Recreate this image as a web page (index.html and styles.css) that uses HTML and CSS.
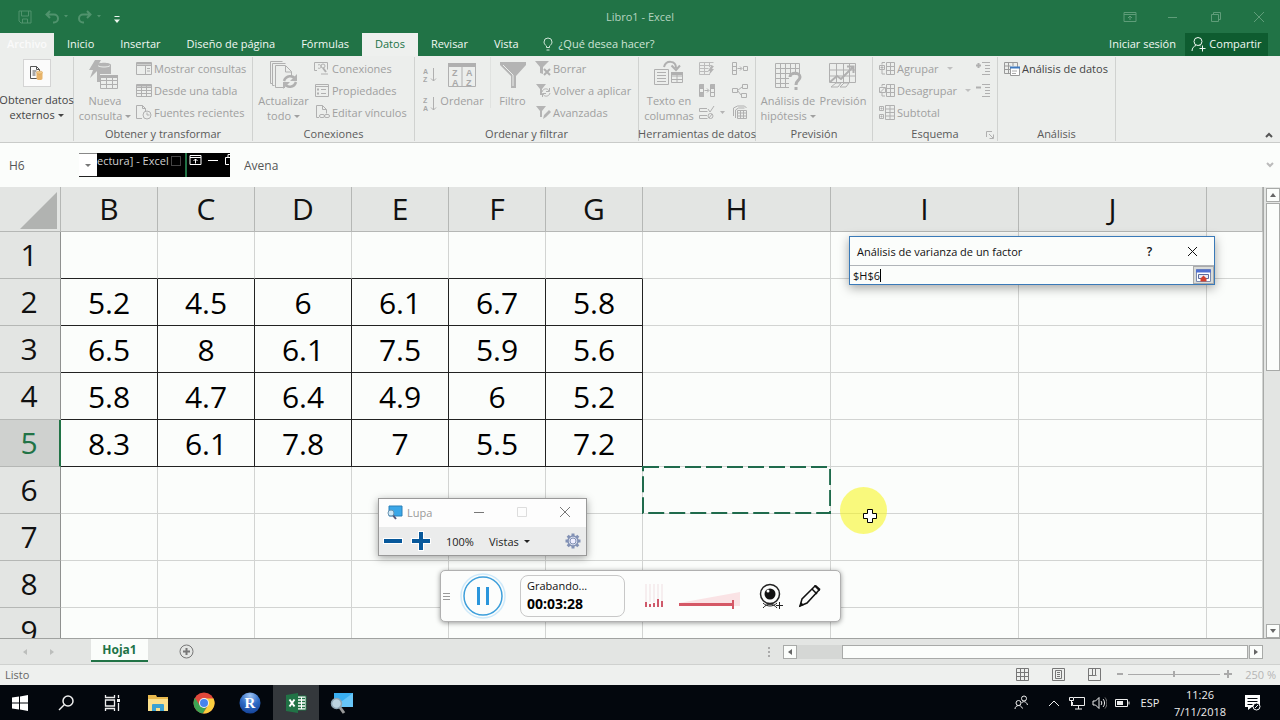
FILE: index.html
```html
<!DOCTYPE html>
<html lang="es">
<head>
<meta charset="utf-8">
<title>Libro1 - Excel</title>
<link rel="stylesheet" href="styles.css">
</head>
<body>
<div class="app">
  <header class="titlebar">
    <div class="quick">
      <button class="qbtn save" aria-label="Guardar"><svg width="14" height="14" viewBox="0 0 14 14"><path d="M1 1h12v12H3l-2-2zM3.500 1v5h7V1M4.500 13V9h5v4"/></svg></button>
      <button class="qbtn wide" aria-label="Deshacer"><svg width="24" height="14" viewBox="0 0 24 14"><path d="M5 1L1.500 4.500 5 8M2 4.500h7a4 4 0 0 1 0 8H8" stroke-width="2"/><path class="solid" d="M19 5h4l-2 2.500z"/></svg></button>
      <button class="qbtn wide" aria-label="Rehacer"><svg width="24" height="14" viewBox="0 0 24 14"><path d="M9 1l3.500 3.500L9 8M12 4.500H5a4 4 0 0 0 0 8h1" stroke-width="2"/><path class="solid" d="M19 5h4l-2 2.500z"/></svg></button>
      <button class="qbtn bright" aria-label="Personalizar"><svg width="8" height="10" viewBox="0 0 8 10"><path d="M1.500 2.500h5"/><path class="solid" d="M1 5.500h6L4 9z"/></svg></button>
    </div>
    <h1 class="doc-title">Libro1 - Excel</h1>
    <div class="winbtns">
      <button aria-label="Opciones de cinta"><svg width="14" height="12" viewBox="0 0 14 12"><path d="M1 1.500h12v9H1zM1 3.500h12M7 9V5M5 7l2-2 2 2"/></svg></button>
      <button aria-label="Minimizar"><svg width="11" height="12" viewBox="0 0 11 12"><path d="M1 6.500h9"/></svg></button>
      <button aria-label="Restaurar"><svg width="12" height="12" viewBox="0 0 12 12"><path d="M1.500 3.500h7v7h-7zM3.500 3.500v-2h7v7h-2"/></svg></button>
      <button aria-label="Cerrar"><svg width="12" height="12" viewBox="0 0 12 12"><path d="M1 1l10 10M11 1L1 11"/></svg></button>
    </div>
  </header>

  <nav class="tabs">
    <button class="tab file">Archivo</button>
    <button class="tab">Inicio</button>
    <button class="tab">Insertar</button>
    <button class="tab">Diseño de página</button>
    <button class="tab">Fórmulas</button>
    <button class="tab active">Datos</button>
    <button class="tab">Revisar</button>
    <button class="tab">Vista</button>
    <button class="tab tell"><svg width="10" height="14" viewBox="0 0 10 14"><path d="M3.500 10.500V9C2 8 1 6.500 1 5a4 4 0 0 1 8 0c0 1.500-1 3-2.500 4v1.500zM3.500 13h3"/></svg>¿Qué desea hacer?</button>
    <button class="tab login">Iniciar sesión</button>
    <button class="tab share"><svg width="15" height="16" viewBox="0 0 15 16"><circle cx="7" cy="5.500" r="4"/><path d="M1 15c0-3 2-5 4-5.500M8.500 9.500l1 .500M11.500 9.500v6M8.500 12.500h6"/></svg>Compartir</button>
  </nav>

  <section class="ribbon">
    <div class="group g-ext">
      <button class="big enabled"><span class="boxed"><svg width="16" height="16" viewBox="0 0 16 16"><path d="M1.500 1.500h6l3 3v9h-9zM7.500 1.500v3h3M3.500 6h4M3.500 8h3M3.500 10h3" stroke="#555"/><path d="M7.500 7.500v6c0 2 6 2 6 0v-6z" fill="#e8b46a" stroke="none"/><ellipse cx="10.500" cy="7.500" rx="3" ry="1.500" fill="#f0c988" stroke="#d89b48" stroke-width=".5"/></svg></span><span>Obtener datos<br>externos <i class="caret"></i></span></button>
    </div>
    <div class="group g-get">
      <div class="items">
        <button class="big"><svg width="34" height="32" viewBox="0 0 34 32"><path class="fill" d="M7 1h6L9 8h4L2 19l3-8H1z"/><path class="fill" d="M9 6c0-3 14-3 14 0v9H12v8H9z"/><path d="M10 6.500c1 2 11 2 12 0" stroke="#eceeec"/><path d="M12.500 16.500h17v13h-17zM12.500 21.500h17M12.500 25.500h17M18.500 18v11M24.500 18v11" fill="#eceeec"/><path d="M12 17.500h18" stroke-width="3"/></svg><span>Nueva<br>consulta <i class="caret"></i></span></button>
        <div class="stack">
          <button class="small"><svg width="16" height="15" viewBox="0 0 16 15"><path d="M.5 1.500h15v12H.5zM.5 4.500h15M9.500 4.500v9M11 7.500h3M11 10h3"/><path d="M1 2.500h14" stroke-width="2"/></svg>Mostrar consultas</button>
          <button class="small"><svg width="16" height="15" viewBox="0 0 16 15"><path d="M.5 1.500h15v12H.5zM.5 4.500h15M.5 7.500h15M.5 10.500h15M5.500 2v12M10.500 2v12"/><path d="M1 2.500h14" stroke-width="2"/></svg>Desde una tabla</button>
          <button class="small"><svg width="16" height="15" viewBox="0 0 16 15"><path d="M6 13.500H.5V.5h6l3 3v3M6.500.5v3h3"/><circle cx="11" cy="10" r="4"/><path d="M11 7.500V10h2.500"/></svg>Fuentes recientes</button>
        </div>
      </div>
      <h2>Obtener y transformar</h2>
    </div>
    <div class="group g-con">
      <div class="items">
        <button class="big"><svg width="30" height="32" viewBox="0 0 30 32"><path d="M3.500 24.500h-2v-22h12M5.500 26.500h-2v-22h13M16 28.500H6.500v-22h10l6 6v5M16.500 7v6h6"/><path d="M15 22c2-6 9-6 11-2M27 23c-2 6-9 6-11 2" stroke-width="2.500"/><path class="fill" d="M28 15v7h-7zM14 30v-7h7z"/></svg><span>Actualizar<br>todo <i class="caret"></i></span></button>
        <div class="stack">
          <button class="small"><svg width="16" height="15" viewBox="0 0 16 15"><path d="M3 9.500H.5v-8h13v7M4 4c4-2 4 5 0 3M7 13h7"/><circle cx="9" cy="5" r="2"/><path d="M9 7l3 4" stroke-width="2"/></svg>Conexiones</button>
          <button class="small"><svg width="16" height="15" viewBox="0 0 16 15"><path d="M1.500 1.500h13v12h-13zM1.500 3.500h13M7 6.500h5M7 10.500h5"/><path d="M4 5.500v2M4 9.500v2" stroke-width="2"/></svg>Propiedades</button>
          <button class="small"><svg width="16" height="15" viewBox="0 0 16 15"><path d="M5 12.500H2.500V.5h6l4 4v4M8.500.5v4h4"/><rect x="5.500" y="9.500" width="5" height="3" rx="1.500"/><rect x="10.500" y="9.500" width="5" height="3" rx="1.500"/></svg>Editar vínculos</button>
        </div>
      </div>
      <h2>Conexiones</h2>
    </div>
    <div class="group g-sort">
      <div class="items">
        <div class="sorts">
          <button aria-label="Ordenar de A a Z"><svg width="14" height="18" viewBox="0 0 14 18"><text x="0" y="8">A</text><text x="0" y="16">Z</text><path d="M10.500 2v13M8 12.500l2.500 2.500 2.500-2.500"/></svg></button>
          <button aria-label="Ordenar de Z a A"><svg width="14" height="18" viewBox="0 0 14 18"><text x="0" y="8">Z</text><text x="0" y="16">A</text><path d="M10.500 2v13M8 12.500l2.500 2.500 2.500-2.500"/></svg></button>
        </div>
        <button class="big"><svg width="28" height="32" viewBox="0 0 28 32"><path d="M.5 5.500h27v22H.5zM14 6v22"/><path d="M0 6h28" stroke-width="4"/><g class="az"><text x="4" y="17">Z</text><text x="4" y="27">A</text><text x="18" y="17">A</text><text x="18" y="27">Z</text></g></svg><span>Ordenar</span></button>
        <button class="big filter"><svg width="28" height="32" viewBox="0 0 28 32"><path class="fill" d="M1 3h26v3L17 17v12h-5V17L1 6z"/><path d="M4 6l10 10v11" stroke="#eceeec"/></svg><span>Filtro</span></button>
        <div class="stack">
          <button class="small"><svg width="16" height="15" viewBox="0 0 16 15"><path class="fill" d="M0 0h14L8 6v7l-3-1V6z"/><path d="M9 8l6 6M15 8l-6 6" stroke-width="2"/></svg>Borrar</button>
          <button class="small"><svg width="16" height="15" viewBox="0 0 16 15"><path class="fill" d="M1 1h10L7 6v6H5V6z"/><path d="M7 9c1-4 6-4 7-1M15 10c-1 4-6 4-7 1M14.500 5v3.500H11M7.500 14v-3.500H11"/></svg>Volver a aplicar</button>
          <button class="small"><svg width="16" height="15" viewBox="0 0 16 15"><path class="fill" d="M1 1h10L7 6v6H5V6zM8 14l1-4 5-5 2 2-5 5z"/></svg>Avanzadas</button>
        </div>
      </div>
      <h2>Ordenar y filtrar</h2>
    </div>
    <div class="group g-tools">
      <div class="items">
        <button class="big"><svg width="30" height="32" viewBox="0 0 30 32"><path d="M.5 10.500h14v15H.5zM3 13.500h9M3 16.500h9M3 19.500h9M3 22.500h9M17.500 13.500h11v10h-11zM17.500 17h11M17.500 20.500h11M23 14v9"/><path d="M17 14.500h12" stroke-width="3"/><path d="M10 8c2-7 12-7 12 1M17.500 6.500L22 11l4-4.500" stroke-width="2"/></svg><span>Texto en<br>columnas</span></button>
        <div class="iconcol">
          <button aria-label="Relleno rápido"><svg width="16" height="15" viewBox="0 0 16 15"><path d="M11 13.500H.5v-12h14M.5 4.500h13M.5 7.500h9M.5 10.500h9M5.500 2v11M10.500 2v4" stroke="#bcbcbc"/><path class="fill" d="M12 5h3l-2 3h2l-5 6 1-4H9z"/></svg></button>
          <button aria-label="Quitar duplicados"><svg width="16" height="15" viewBox="0 0 16 15"><path d="M.5 1.500h4v12h-4zM11.500 1.500h4v12h-4zM.5 5.500h4M.5 9.500h4M11.500 5.500h4M11.500 9.500h4M5.500 7.500h4M8 5.500l2 2-2 2"/><path class="fill" d="M1 1h4v4H1zM1 10h4v4H1zM12 1h4v4h-4z"/></svg></button>
          <button aria-label="Validación de datos"><svg width="26" height="15" viewBox="0 0 26 15"><path d="M8 3.500H.5v3h8M8 10.500H.5v3h8M9 4l2 3 4-6"/><circle cx="11.500" cy="11" r="2.500"/><path d="M10 13l3-4"/><path class="fill" d="M21 6h5l-2.500 3z"/></svg></button>
        </div>
        <div class="iconcol last">
          <button aria-label="Consolidar"><svg width="16" height="15" viewBox="0 0 16 15"><path d="M.5 1.500h4v12h-4zM.5 5.500h4M.5 9.500h4M5.500 7.500h4M8 5.500l2 2-2 2M11.500 5.500h4v4h-4z"/></svg></button>
          <button aria-label="Relaciones"><svg width="16" height="15" viewBox="0 0 16 15"><path d="M.5 5.500h5v4h-5zM10.500 1.500h5v4h-5zM9.500 10.500h5v4h-5zM5.500 7.500L10 4M5.500 7.500l4 5"/></svg></button>
          <button aria-label="Modelo de datos"><svg width="16" height="15" viewBox="0 0 16 15"><path d="M1.500 11V3l4-2h7l2 2M3.500 13V5l3-2h6M5.500 5.500h9v8h-9zM5.500 8h9M5.500 11h9M8.500 6v8M11.500 6v8"/></svg></button>
        </div>
      </div>
      <h2>Herramientas de datos</h2>
    </div>
    <div class="group g-prev">
      <div class="items">
        <button class="big"><svg width="28" height="32" viewBox="0 0 28 32"><path d="M1.500 4.500h24v24h-24zM1.500 9.500h24M1.500 14.500h24M1.500 19.500h24M1.500 24.500h24M6.500 5v23M11.500 5v23M16.500 5v23M21.500 5v23"/><path d="M15 16h12v16H15z" fill="#eceeec" stroke="none"/><path d="M16 18c0-5 10-5 10 0 0 4-4 3-4 8M22 28v3" stroke-width="3"/></svg><span>Análisis de<br>hipótesis <i class="caret"></i></span></button>
        <button class="big"><svg width="28" height="32" viewBox="0 0 28 32"><path d="M.5 4.500h26v19H.5zM.5 11h26M.5 17h26M7.500 5v18M14.500 5v18M20.500 5v18M2 28l5-4h5l-3 4zM11 28l4-4h5l-3 4z"/><path d="M1 23l7-6 4 3 12-12M18 7.500h6.500V14" stroke-width="2"/></svg><span>Previsión</span></button>
      </div>
      <h2>Previsión</h2>
    </div>
    <div class="group g-outline">
      <div class="items">
        <div class="stack">
          <button class="small"><svg width="16" height="15" viewBox="0 0 16 15"><path d="M3 3.500V1.500h3M3 9v4h3M.5 4.500h5v4h-5zM1.500 6.500h3M3 5v3M7.500 1.500h8v12h-8zM7.500 5.500h8M7.500 9.500h8M11.500 2v11"/></svg>Agrupar <i class="caret far"></i></button>
          <button class="small"><svg width="16" height="15" viewBox="0 0 16 15"><path d="M3 3.500V1.500h3M3 9v4h3M.5 4.500h6v5h-6zM1.500 9l4-4M7.500 1.500h8v12h-8zM7.500 5.500h8M7.500 9.500h8M11.500 2v11"/></svg>Desagrupar <i class="caret far"></i></button>
          <button class="small"><svg width="16" height="15" viewBox="0 0 16 15"><path d="M.5 1.500h4v4h-4zM.5 9.500h4v4h-4zM1.500 3.500h2M2.500 2.500v2M1.500 11.500h2M2.500 10.500v2M6.500.5h9v14h-9zM6.500 4h9M6.500 7.500h9M6.500 11h9M11 1v13"/></svg>Subtotal</button>
        </div>
        <div class="iconcol detail">
          <button aria-label="Mostrar detalle"><svg width="15" height="15" viewBox="0 0 15 15"><path d="M0 4.500h5M2.500 2v5" stroke-width="2"/><path d="M6 1.500h8M9 4.500h5M9 7.500h5M9 10.500h5M6 13.500h8"/></svg></button>
          <button aria-label="Ocultar detalle"><svg width="15" height="15" viewBox="0 0 15 15"><path d="M0 4.500h5" stroke-width="2"/><path d="M6 1.500h8M9 4.500h5M9 7.500h5M9 10.500h5M6 13.500h8"/></svg></button>
        </div>
      </div>
      <h2>Esquema</h2>
      <button class="launcher" aria-label="Opciones de esquema"><svg width="8" height="8" viewBox="0 0 8 8"><path d="M.5 6V.5H6M3 3l4 4M7.500 3.500v4h-4"/></svg></button>
    </div>
    <div class="group g-ana">
      <div class="items">
        <div class="stack">
          <button class="small enabled"><svg width="16" height="15" viewBox="0 0 16 15"><path d="M.5 1.500h13v11H.5zM.5 5h6M.5 8.500h6M4.500 2v10M9 2v3" stroke="#999"/><path d="M6.500 6.500h9v8h-9z" fill="#fff" stroke="#999"/><path d="M6 6.500h10" stroke="#3f7ac0" stroke-width="2"/><path d="M8 10h5M8 12.500h4" stroke="#aaa"/></svg>Análisis de datos</button>
        </div>
      </div>
      <h2>Análisis</h2>
    </div>
    <button class="collapse" aria-label="Contraer la cinta"><svg width="8" height="6" viewBox="0 0 8 6"><path d="M1 5l3-3 3 3"/></svg></button>
  </section>

  <section class="formula">
    <input class="namebox" aria-label="Cuadro de nombres" value="H6">
    <button class="namedrop" aria-label="Lista de nombres"><i class="caret"></i></button>
    <div class="remnant"><span>ectura] - Excel</span><i class="sq"></i><i class="bar"></i>
      <svg width="44" height="14" viewBox="0 0 44 14"><path d="M1 2.500h11v9H1zM1 4.500h11M6.500 10.500V6M4.500 8l2-2 2 2M19 7.500h10M40 11.500h-3.500v-7H44M39 4.500v-3h5"/></svg>
    </div>
    <input class="fx" aria-label="Barra de fórmulas" value="Avena">
    <button class="expand" aria-label="Expandir"><svg width="8" height="6" viewBox="0 0 8 6"><path d="M1 1l3 3 3-3" stroke-width="2"/></svg></button>
  </section>

  <main class="sheet">
    <div class="gridwrap">
      <table class="grid">
        <colgroup><col class="c-row"><col class="c-n"><col class="c-n"><col class="c-n"><col class="c-n"><col class="c-n"><col class="c-n"><col class="c-w"><col class="c-w"><col class="c-w"><col></colgroup>
        <thead><tr><th class="corner"><svg width="38" height="38" viewBox="0 0 38 38"><path d="M37 0v37H0z"/></svg></th><th>B</th><th>C</th><th>D</th><th>E</th><th>F</th><th>G</th><th>H</th><th>I</th><th>J</th><th></th></tr></thead>
        <tbody>
          <tr class="above"><th>1</th><td></td><td></td><td></td><td></td><td></td><td></td><td></td><td></td><td></td><td></td></tr>
          <tr class="data"><th>2</th><td>5.2</td><td>4.5</td><td>6</td><td>6.1</td><td>6.7</td><td>5.8</td><td></td><td></td><td></td><td></td></tr>
          <tr class="data"><th>3</th><td>6.5</td><td>8</td><td>6.1</td><td>7.5</td><td>5.9</td><td>5.6</td><td></td><td></td><td></td><td></td></tr>
          <tr class="data"><th>4</th><td>5.8</td><td>4.7</td><td>6.4</td><td>4.9</td><td>6</td><td>5.2</td><td></td><td></td><td></td><td></td></tr>
          <tr class="data"><th class="current">5</th><td>8.3</td><td>6.1</td><td>7.8</td><td>7</td><td>5.5</td><td>7.2</td><td></td><td></td><td></td><td></td></tr>
          <tr><th>6</th><td></td><td></td><td></td><td></td><td></td><td></td><td class="picked"><svg class="ants"><rect x="1" y="1" width="99%" height="46"/></svg></td><td></td><td></td><td></td></tr>
          <tr><th>7</th><td></td><td></td><td></td><td></td><td></td><td></td><td></td><td></td><td></td><td></td></tr>
          <tr><th>8</th><td></td><td></td><td></td><td></td><td></td><td></td><td></td><td></td><td></td><td></td></tr>
          <tr><th>9</th><td></td><td></td><td></td><td></td><td></td><td></td><td></td><td></td><td></td><td></td></tr>
        </tbody>
      </table>
    </div>
    <div class="vscroll">
      <button class="sbtn" aria-label="Subir"><i class="up"></i></button>
      <div class="vthumb"></div>
      <button class="sbtn end" aria-label="Bajar"><i class="down"></i></button>
    </div>
  </main>

  <section class="sheetbar">
    <button class="nav" aria-label="Hoja anterior"><i class="left"></i></button>
    <button class="nav" aria-label="Hoja siguiente"><i class="right"></i></button>
    <button class="sheettab">Hoja1</button>
    <button class="addsheet" aria-label="Hoja nueva"><svg width="15" height="15" viewBox="0 0 15 15"><circle cx="7.500" cy="7.500" r="6.500"/><path d="M4 7.500h7M7.500 4v7" stroke-width="2"/></svg></button>
    <div class="dots"><i></i><i></i><i></i></div>
    <div class="hscroll">
      <button class="sbtn" aria-label="Izquierda"><i class="left"></i></button>
      <div class="hthumb"></div>
      <button class="sbtn" aria-label="Derecha"><i class="right"></i></button>
    </div>
  </section>

  <footer class="status">
    <span class="ready">Listo</span>
    <button class="view" aria-label="Normal"><svg width="13" height="13" viewBox="0 0 13 13"><path d="M.5.5h12v12H.5zM.5 4.500h12M.5 8.500h12M4.500 0v12M8.500 0v12"/></svg></button>
    <button class="view" aria-label="Diseño de página"><svg width="13" height="13" viewBox="0 0 13 13"><path d="M.5.5h12v12H.5zM3.500 2.500h6v8h-6zM5 4.500h3M5 6.500h3M5 8.500h3"/></svg></button>
    <button class="view" aria-label="Salto de página"><svg width="13" height="13" viewBox="0 0 13 13"><path d="M.5.5h12v12H.5zM.5 7.500h7V.500M4.500.5v7M7.500 7.500h1"/></svg></button>
    <button class="zoombtn" aria-label="Alejar"><svg width="8" height="8" viewBox="0 0 8 8"><path d="M1 4h6" stroke-width="2"/></svg></button>
    <input class="zoomrange" type="range" aria-label="Zoom" value="50">
    <button class="zoombtn" aria-label="Acercar"><svg width="8" height="8" viewBox="0 0 8 8"><path d="M0 4h8M4 0v8" stroke-width="2"/></svg></button>
    <span class="zoomval">250 %</span>
  </footer>

  <footer class="taskbar">
    <button class="start" aria-label="Inicio"><svg width="16" height="16" viewBox="0 0 16 16"><path fill="#fff" d="M0 2.500l7-1v6H0zM8 1.400L16 0v7.500H8zM0 8.500h7v6l-7-1zM8 8.500h8V16l-8-1.400z"/></svg></button>
    <button class="app-btn" aria-label="Buscar"><svg width="16" height="16" viewBox="0 0 16 16"><circle cx="10" cy="6" r="5" fill="none" stroke="#eee" stroke-width="1.500"/><path d="M6.500 9.500L1 15" stroke="#eee" stroke-width="1.500"/></svg></button>
    <button class="app-btn" aria-label="Vista de tareas"><svg width="17" height="16" viewBox="0 0 17 16"><path d="M1.500 0v2.500h9V0M1.500 5h9v6h-9zM1.500 16v-2.500h9V16M14.500 0v3M14.500 8v8" fill="none" stroke="#eee" stroke-width="1.300"/><path d="M13 4h3v3h-3z" fill="#eee"/></svg></button>
    <button class="app-btn" aria-label="Explorador"><svg width="22" height="20" viewBox="0 0 22 20"><path d="M1 2h8l1 2h11v14H1z" fill="#e9b94d"/><path d="M1 6h20v12H1z" fill="#fbe08c"/><path d="M5 18v-6q0-1 1-1h10q1 0 1 1v6h-4v-3H9v3z" fill="#3aa1d2"/></svg></button>
    <button class="app-btn" aria-label="Chrome"><svg width="22" height="22" viewBox="0 0 22 22"><circle cx="11" cy="11" r="10.500" fill="#e0483b"/><path d="M1.900 5.800A10.500 10.500 0 0 0 10 21.500l4.500-8L11 11l-4.500 2z" fill="#3da553"/><path d="M11 6.500h9.500A10.500 10.500 0 0 1 10 21.500l5-8z" fill="#fbcf3f"/><circle cx="11" cy="11" r="5" fill="#f2f2f2"/><circle cx="11" cy="11" r="4" fill="#4684ee"/></svg></button>
    <button class="app-btn" aria-label="R"><svg width="22" height="22" viewBox="0 0 22 22"><defs><radialGradient id="rg" cx=".5" cy=".15" r=".9"><stop offset="0" stop-color="#9fc4f2"/><stop offset=".5" stop-color="#2f6cc6"/><stop offset="1" stop-color="#123e93"/></radialGradient></defs><circle cx="11" cy="11" r="10.500" fill="url(#rg)"/><text x="11" y="16" text-anchor="middle" class="rtext">R</text></svg></button>
    <button class="app-btn on" aria-label="Excel"><svg width="21" height="20" viewBox="0 0 21 20"><path d="M10 3h10v14H10z" fill="#fff" stroke="#217346"/><path d="M12 5.500h7M12 8.500h7M12 11.500h7M12 14.500h7" stroke="#217346" stroke-width="1.500"/><path d="M15.500 4v12" stroke="#fff"/><path d="M0 2l12-2v20L0 18z" fill="#217346"/><path d="M3.500 6.500l5 7M8.500 6.500l-5 7" stroke="#fff" stroke-width="2"/></svg></button>
    <button class="app-btn" aria-label="Lupa"><svg width="24" height="22" viewBox="0 0 24 22"><path d="M4 1h19v14H4z" fill="#39aef0"/><path d="M4 15L23 1v14z" fill="#67c5f7"/><path d="M9 14l5 7" stroke="#999" stroke-width="3"/><circle cx="6.500" cy="11.500" r="5" fill="#bcd3df" stroke="#8ea4b2" stroke-width="1.500"/></svg></button>
    <div class="tray">
      <button class="people" aria-label="Contactos"><svg width="15" height="15" viewBox="0 0 15 15"><circle cx="10" cy="3.500" r="2.500"/><path d="M7.500 8c1-2 5-2 6 2"/><circle cx="4.500" cy="8" r="2.500"/><path d="M1 14c0-4 6-5 7.500-.500"/></svg></button>
      <button aria-label="Iconos ocultos"><svg width="12" height="8" viewBox="0 0 12 8"><path d="M1 7l5-5 5 5"/></svg></button>
      <button aria-label="Red"><svg width="16" height="14" viewBox="0 0 16 14"><path d="M5 1.500h10.500v8H3.500V6M9.500 9.500V13M6 13h7M.5 1.500h4v3h-4zM2.500 4v6"/></svg></button>
      <button aria-label="Volumen"><svg width="15" height="14" viewBox="0 0 15 14"><path d="M1 5h2.500L7 1.500v11L3.500 9H1zM9 5c1 1 1 3 0 4M11 3c2 2 2 6 0 8"/><path d="M13 1.500c2.500 3 2.500 8 0 11" stroke="#777"/></svg></button>
      <button aria-label="Batería"><svg width="15" height="10" viewBox="0 0 15 10"><path d="M.5 1.500h12v7H.5zM14 3.500v3"/><path d="M2 3h6v4H2z" fill="#eee" stroke="none"/></svg></button>
      <button class="lang">ESP</button>
      <button class="clock">11:26<br>7/11/2018</button>
      <button class="note" aria-label="Notificaciones"><svg width="17" height="18" viewBox="0 0 17 18"><path d="M1 1h15v12H8l-4 3v-3H1z" fill="#fff" stroke="none"/><path d="M3.500 4.500h10M3.500 7.500h10M3.500 10.500h5" stroke="#02070d"/><circle cx="12.500" cy="12.500" r="3.500" fill="#02070d" stroke="#fff"/><path d="M11 14l3-3"/></svg></button>
    </div>
  </footer>

  <section class="dialog">
    <div class="dialog-head"><label for="range">Análisis de varianza de un factor</label><button class="help" aria-label="Ayuda">?</button><button aria-label="Cerrar"><svg width="11" height="11" viewBox="0 0 11 11"><path d="M1 1l9 9M10 1l-9 9"/></svg></button></div>
    <div class="dialog-body"><input id="range" value="$H$6" size="4"><i class="cursor"></i><button aria-label="Restaurar diálogo"><svg width="15" height="13" viewBox="0 0 15 13"><path d="M.5.5h14v12H.5z" fill="#fff" stroke="#7c8bb0"/><path d="M0 2h15" stroke="#4e6fd0" stroke-width="3"/><path d="M2.500 5.500h10v4h-10z" fill="#e8eaf5" stroke="#5a6c9d"/><path d="M7.500 6.500l3 3v3h-6v-3z" fill="#d0402f" stroke="none"/></svg></button></div>
  </section>

  <section class="lupa">
    <div class="lupa-head"><svg width="16" height="15" viewBox="0 0 16 15"><path d="M2 1h13v10H2z" fill="#3ba7e8" stroke="#2b80b8"/><path d="M5 9l4 5" stroke="#557" stroke-width="2"/><circle cx="4" cy="8" r="3" fill="#cfe8f8" stroke="#6a93b0"/></svg><span>Lupa</span><button aria-label="Minimizar"><svg width="10" height="10" viewBox="0 0 10 10"><path d="M0 5.500h10"/></svg></button><button class="off" aria-label="Maximizar"><svg width="10" height="10" viewBox="0 0 10 10"><path d="M.5.5h9v9h-9z"/></svg></button><button aria-label="Cerrar"><svg width="10" height="10" viewBox="0 0 10 10"><path d="M0 0l10 10M10 0L0 10"/></svg></button></div>
    <div class="lupa-body"><button class="pm" aria-label="Reducir"><svg width="20" height="20" viewBox="0 0 20 20"><path d="M0 10h20" stroke="#fff" stroke-width="6"/><path d="M1 10h18" stroke="#07589b" stroke-width="4"/></svg></button><button class="pm" aria-label="Ampliar"><svg width="20" height="20" viewBox="0 0 20 20"><path d="M0 10h20M10 0v20" stroke="#fff" stroke-width="6"/><path d="M1 10h18M10 1v18" stroke="#07589b" stroke-width="4"/></svg></button><span class="pct">100%</span><button class="views">Vistas <i class="caret"></i></button><button class="gear" aria-label="Opciones"><svg width="16" height="16" viewBox="0 0 16 16"><path d="M8 .5v3M8 12.500v3M.5 8h3M12.500 8h3M2.700 2.700l2 2M11.300 11.300l2 2M2.700 13.300l2-2M11.300 4.700l2-2" stroke="#8291b5" stroke-width="3"/><circle cx="8" cy="8" r="5" fill="#dde2ef" stroke="#8291b5" stroke-width="1.500"/><circle cx="8" cy="8" r="3" fill="#eef" stroke="#8291b5"/></svg></button></div>
  </section>

  <section class="recorder">
    <div class="grip"><i></i><i></i><i></i></div>
    <button class="pause" aria-label="Pausa"><svg width="46" height="46" viewBox="0 0 46 46"><circle cx="23" cy="23" r="22" stroke="#cfeafa" stroke-width="1.500"/><circle cx="23" cy="23" r="19" stroke="#3d9fdb" stroke-width="1.500"/><path d="M18.500 14v18M27.500 14v18" stroke="#2a96dc" stroke-width="3"/></svg></button>
    <div class="timer"><span>Grabando...</span><strong>00:03:28</strong></div>
    <svg class="levels" width="18" height="24" viewBox="0 0 18 24"><path d="M1 0v18M5 0v18M9 0v18M13 0v18M17 0v18" stroke="#f6eeef" stroke-width="2"/><path d="M1 18v5M5 20v3M9 19v4M13 15v8M17 17v6" stroke="#cf5a6b" stroke-width="2"/></svg>
    <svg class="volume" width="62" height="20" viewBox="0 0 62 20"><path class="wedge" d="M0 13L61 2v14H0z"/><path d="M0 14.500h54" stroke="#d55866" stroke-width="3"/><path d="M54 10v9" stroke="#d55866" stroke-width="2"/></svg>
    <button class="cam" aria-label="Cámara"><svg width="26" height="26" viewBox="0 0 26 26"><circle cx="11" cy="11" r="9.500" stroke="#222" stroke-width="1.500"/><circle cx="11" cy="11" r="5.500" fill="#111"/><circle cx="9" cy="8" r="1.500" fill="#fff"/><path d="M4 25c4-5 10-5 14 0M4 20c4 4 10 4 14 0M17 22.500h7M20.500 19v7" stroke="#222"/></svg></button>
    <button class="pen" aria-label="Lápiz"><svg width="24" height="24" viewBox="0 0 24 24"><path d="M2 22l2-7L17 2l4 4L9 19z" stroke="#111" stroke-width="1.500"/><path d="M16 1.500L18 1l4.500 4-1 2zM1 23l2-5 3 3z" fill="#111"/><path d="M14 5l5 5" stroke="#111" stroke-width="1.500"/></svg></button>
  </section>

  <div class="pointer"><svg width="14" height="14" viewBox="0 0 14 14"><path d="M4.500.5h5v4h4v5h-4v4h-5v-4h-4v-5h4z" fill="#fff" stroke="#000"/></svg></div>
</div>
</body>
</html>
```

FILE: styles.css
```css
* { box-sizing: border-box; }
body { margin: 0; font-family: "Open Sans", "Noto Sans", sans-serif; font-size: 11px; color: #444; background: #fbfdfb; }
button { margin: 0; padding: 0; border: 0; background: none; font: inherit; color: inherit; display: flex; align-items: center; justify-content: center; }
input { border: 0; padding: 0; margin: 0; background: none; font: inherit; color: inherit; outline: 0; min-width: 0; }
svg { fill: none; stroke: currentColor; flex: none; display: block; }
.app { position: relative; display: flex; flex-direction: column; height: 100vh; overflow: hidden; }

.titlebar { display: grid; grid-template-columns: 1fr auto 1fr; align-items: center; height: 33px; flex: none; background: #217346; color: #b5d3c0; }
.quick { display: flex; align-items: center; gap: 9px; padding-left: 18px; height: 28px; color: #50936d; }
.quick .save { margin-right: 4px; }
.quick .bright { color: #eef6f0; padding: 4px 0 0 2px; }
.solid { fill: currentColor; stroke: none; }
.doc-title { margin: 0; font-size: 11px; font-weight: 400; }
.winbtns { display: flex; justify-content: flex-end; height: 28px; color: #5f9d79; }
.winbtns button { width: 43px; }

.tabs { display: flex; height: 23px; flex: none; background: #217346; color: #f1f8f3; }
.tab { padding: 0 13px 2px; white-space: nowrap; }
.tab.file { width: 54px; padding: 0 0 2px; background: #eceeec; color: #fafafa; font-weight: 600; }
.tab.active { background: #eef0ee; color: #217346; }
.tab.tell { gap: 6px; padding-left: 11px; color: #cfe5d7; }
.tab.login { margin-left: auto; padding: 0 9px 2px; }
.tab.share { width: 83px; padding: 0 0 2px; margin-right: 12px; gap: 3px; background: #0e5c30; }

.ribbon { display: flex; height: 87px; flex: none; background: #eceeec; border-bottom: 1px solid #c9cbc9; color: #a0a0a0; }
.group { position: relative; display: flex; flex-direction: column; flex: none; height: 84px; margin-top: 1px; border-right: 1px solid #d0d2d0; }
.group h2 { margin: auto 0 0; font-size: 11px; font-weight: 400; line-height: 14px; text-align: center; color: #5a5a5a; white-space: nowrap; }
.g-tools h2 { align-self: center; }
.items { display: flex; align-items: flex-start; }
.g-ext { width: 74px; }
.g-get { width: 179px; }
.g-con { width: 162px; }
.g-sort { width: 224px; }
.g-tools { width: 117px; }
.g-prev { width: 117px; }
.g-outline { width: 125px; }
.g-ana { width: 118px; }
.big { flex-direction: column; justify-content: flex-start; gap: 2px; padding-top: 2px; line-height: 15px; white-space: nowrap; text-align: center; }
.enabled { color: #444; }
.boxed { width: 28px; height: 28px; display: flex; align-items: center; justify-content: center; background: #fbfbfb; border: 1px solid #d4d4d4; }
.g-ext .big { gap: 5px; width: 73px; align-self: flex-start; }
.fill { fill: #b4b4b4; stroke: none; }
.ribbon svg { color: #b0b0b0; }
.caret { display: inline-block; border: 3px solid transparent; border-top-color: currentColor; border-bottom: 0; vertical-align: 2px; }
.caret.far { margin-left: 6px; color: #c0c0c0; }
.stack { display: flex; flex-direction: column; align-items: flex-start; }
.small { height: 22px; gap: 2px; white-space: nowrap; }
.g-get .big { width: 62px; }
.g-con .big { width: 61px; }
.sorts { display: flex; flex-direction: column; gap: 11px; padding: 9px 4px 0 8px; }
.sorts text { font-family: "Liberation Sans", sans-serif; font-size: 7px; font-weight: 700; fill: #a8a8a8; stroke: none; }
.az text { font-family: "Liberation Sans", sans-serif; font-size: 9px; font-weight: 700; fill: #a8a8a8; stroke: none; }
.g-sort .big { width: 42px; }
.g-sort .big.filter { width: 44px; margin: 0 1px 0 7px; border-left: 1px solid #e0e2e0; }
.g-tools .big { width: 60px; }
.iconcol { display: flex; flex-direction: column; align-items: flex-start; width: 33px; }
.iconcol.last { width: 20px; }
.iconcol button { height: 22px; }
.g-prev .big { width: 64px; }
.g-prev .big + .big { width: 46px; }
.g-outline .stack { width: 96px; padding-left: 6px; }
.g-outline .iconcol { margin-left: 7px; width: 16px; }
.launcher { position: absolute; right: 3px; bottom: 2px; }
.g-ana .stack { padding-left: 6px; }
.collapse { margin: auto 7px 4px auto; }
.ribbon .collapse svg { color: #555; stroke-width: 2; }

.formula { display: flex; align-items: center; height: 44px; flex: none; color: #555; }
.namebox { width: 79px; padding-left: 9px; font-size: 12px; }
.namedrop { width: 18px; height: 24px; border-top: 1px solid #888; border-bottom: 1px solid #222; color: #777; background: #fff; }
.remnant { display: flex; align-items: flex-start; width: 133px; height: 24px; overflow: hidden; background: #000; color: #cfcfcf; white-space: nowrap; }
.remnant span { width: 73px; flex: none; line-height: 16px; }
.sq { width: 10px; height: 10px; flex: none; margin: 3px 4px 0 1px; border: 1px solid #444; }
.remnant .bar { width: 2px; height: 24px; flex: none; margin-right: 2px; background: #217346; }
.remnant svg { color: #fff; }
.fx { flex: 1; padding-left: 14px; font-size: 12px; }
.expand { margin-right: 6px; color: #bbb; }

.sheet { display: flex; flex: 1; min-height: 0; background: #e3e5e3; }
.gridwrap { flex: 1; overflow: hidden; background: #fbfdfb; border-right: 1px solid #a8aaa8; }
.grid { width: 100%; table-layout: fixed; border-collapse: separate; border-spacing: 0; font-size: 30px; color: #000; }
.c-row { width: 61px; }
.c-n { width: 97px; }
.c-w { width: 188px; }
.grid th { background: #e3e5e3; font-weight: 400; padding: 0; border-right: 1px solid #b5b7b5; border-bottom: 1px solid #b5b7b5; line-height: 46px; color: #111; }
.grid thead th { height: 45px; line-height: 44px; }
.grid tbody th { border-right-color: #8f918f; padding-right: 2px; }
.grid td { height: 47px; line-height: 44px; padding: 2px 0 0; text-align: center; border-right: 1px solid #d2d4d2; border-bottom: 1px solid #d2d4d2; }
.corner svg { margin: 3px 2px 0 auto; fill: #b1b3b1; stroke: none; }
.above td:nth-child(-n+7), .data td:nth-child(-n+7) { border-bottom-color: #222; }
.data td:nth-child(-n+7) { border-right-color: #222; }
.grid tbody .current { background: #cfd1cf; color: #217346; border-right: 2px solid #217346; padding-right: 1px; }
.grid .picked { position: relative; }
.ants { position: absolute; left: -1px; top: -1px; width: calc(100% + 2px); height: 48px; stroke: #1f6b4c; stroke-width: 2; stroke-dasharray: 16 5; }
.vscroll { display: flex; flex-direction: column; width: 16px; padding: 1px 0 0 2px; }
.sbtn { width: 14px; height: 14px; flex: none; background: #fbfdfb; border: 1px solid #a8aaa8; color: #666; }
.sbtn.end { margin-top: auto; }
.vthumb { height: 168px; margin-top: 1px; background: #fbfdfb; border: 1px solid #a8aaa8; }
.up, .down, .left, .right { border: 3px solid transparent; }
.up { border-top: 0; border-bottom: 4px solid currentColor; }
.down { border-bottom: 0; border-top: 4px solid currentColor; }
.left { border-left: 0; border-right: 4px solid currentColor; }
.right { border-right: 0; border-left: 4px solid currentColor; }

.sheetbar { display: flex; align-items: center; height: 27px; flex: none; background: #e3e5e3; border-top: 1px solid #a0a2a0; border-bottom: 1px solid #cfd1cf; }
.nav { width: 27px; color: #bcbebc; }
.nav:first-child { margin-left: 11px; }
.sheettab { align-self: flex-start; width: 57px; height: 23px; margin-left: 26px; background: #fbfdfb; border-bottom: 2px solid #217346; color: #217346; font-size: 12px; font-weight: 700; }
.addsheet { margin-left: 31px; color: #777; }
.dots { margin-left: auto; display: flex; flex-direction: column; gap: 2px; }
.dots i { width: 2px; height: 2px; background: #aaa; }
.hscroll { display: flex; width: 480px; margin: 0 17px 0 13px; background: #d5d7d5; }
.hthumb { flex: 1; margin-left: 45px; margin-right: 1px; background: #fbfdfb; border: 1px solid #a8aaa8; }

.status { display: flex; align-items: center; height: 20px; flex: none; padding-bottom: 2px; background: #eef0ee; color: #666; }
.ready { margin: 0 auto 0 5px; }
.view { width: 36px; }
.view svg { color: #777; }
.zoombtn { width: 16px; color: #aaa; }
.zoomrange { appearance: none; width: 92px; height: 6px; background: linear-gradient(#aaa, #aaa) center / 100% 1px no-repeat; }
.zoomrange::-webkit-slider-thumb { appearance: none; width: 2px; height: 6px; background: #aaa; }
.zoomval { width: 44px; padding-right: 4px; text-align: right; color: #b5b5b5; }

.taskbar { display: flex; height: 35px; flex: none; padding-bottom: 0; background: #03070d; color: #eee; }
.start { width: 43px; padding-right: 4px; }
.taskbar svg { stroke: none; }
.app-btn { width: 46px; }
.app-btn.on { background: #34383c; }
.rtext { font-family: "Liberation Serif", serif; font-size: 15px; font-weight: 700; fill: #fff; }
.tray { display: flex; margin-left: auto; padding-right: 10px; }
.tray .people svg, .tray svg { stroke: currentColor; }
.tray button { width: 23px; }
.tray .people { width: 42px; }
.tray .lang { width: 32px; }
.tray .clock { width: 68px; line-height: 17px; }
.tray .note { width: 36px; }

.dialog { position: absolute; left: 849px; top: 236px; width: 366px; border: 1px solid #3a7ab8; background: #fbfdfb; box-shadow: 0 3px 10px rgba(0,0,0,.35); color: #111; }
.dialog-head { display: flex; height: 28px; padding-left: 7px; align-items: center; }
.dialog-head label { margin-right: auto; }
.dialog-head button { width: 43px; }
.dialog-head .help { font-size: 12px; font-weight: 600; }
.dialog-body { display: flex; align-items: center; height: 19px; padding-left: 3px; border-top: 1px solid #b0b4b8; }
.dialog-body input { field-sizing: content; }
.cursor { width: 1px; height: 13px; background: #000; }
.dialog-body button { width: 21px; height: 18px; margin-left: auto; background: #d9dcd9; border: 1px solid #aaa; }

.lupa { position: absolute; left: 378px; top: 498px; width: 209px; border: 1px solid #999; background: #fdfdfd; box-shadow: 0 2px 8px rgba(0,0,0,.35); }
.lupa-head { display: flex; align-items: center; height: 28px; padding: 0 2px 2px 8px; gap: 4px; color: #999; }
.lupa-head button { width: 39px; color: #777; }
.lupa-head span { margin-right: auto; }
.lupa-head .off { color: #ddd; }
.lupa-body { display: flex; align-items: center; height: 28px; padding: 0 5px 0 4px; background: #ebecec; color: #222; }
.pm { margin-right: 8px; }
.pct { margin-left: 7px; }
.views { margin-left: 15px; gap: 5px; }
.gear { margin-left: auto; }

.recorder { position: absolute; left: 440px; top: 570px; width: 401px; height: 52px; display: flex; align-items: center; border: 1px solid #b0b0b0; border-radius: 5px; background: #fcfdfc; box-shadow: 0 1px 5px rgba(0,0,0,.4); }
.grip { display: flex; flex-direction: column; gap: 2px; margin: 0 10px 0 2px; }
.grip i { width: 7px; height: 1px; background: #999; }
.timer { display: flex; flex-direction: column; width: 105px; height: 42px; margin-left: 14px; padding: 0 6px; border: 1px solid #c8c8c8; border-radius: 8px; color: #111; line-height: 19px; }
.timer strong { font-size: 14px; color: #000; line-height: 18px; }
.levels { margin-left: 20px; }
.volume { margin: 8px 0 0 16px; }
.wedge { fill: #fae3e5; stroke: none; }
.cam { margin-left: 18px; }
.pen { margin-left: 13px; }
.cam svg, .pen svg { stroke: none; }

.pointer { position: absolute; left: 840px; top: 487px; width: 47px; height: 47px; border-radius: 50%; background: rgba(248,246,20,.55); }
.pointer svg { margin: 22px 0 0 23px; }
```
